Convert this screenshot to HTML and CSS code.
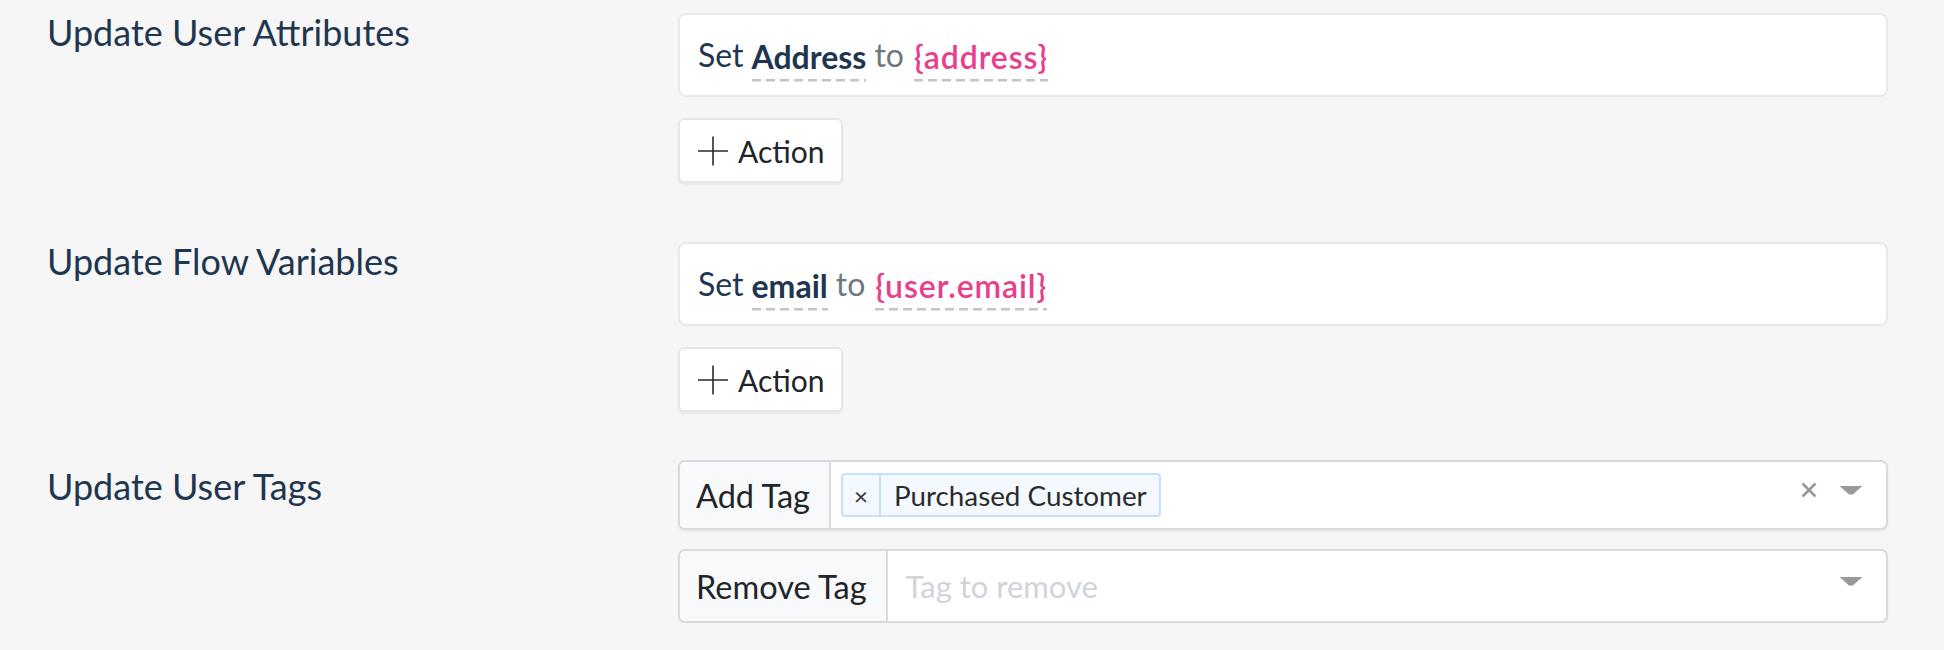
FILE: index.html
```html
<!DOCTYPE html>
<html lang="en">
<head>
<meta charset="utf-8">
<title>Actions</title>
<link rel="stylesheet" href="styles.css">
</head>
<body>
<div class="page">
  <section class="section section-attrs">
    <div class="label">Update User Attributes</div>
    <div class="content">
      <div class="rule">
        <span class="kw">Set</span>
        <span class="field">Address</span>
        <span class="to">to</span>
        <span class="value">{address}</span>
      </div>
      <button class="add-action" type="button">
        <svg class="plus" viewBox="0 0 30 30" width="30" height="30" aria-hidden="true"><path d="M15 0.5V29.5M0 15H30" stroke="#2b2b2b" stroke-width="1.6" fill="none"/></svg>
        <span>Action</span>
      </button>
    </div>
  </section>

  <section class="section section-vars">
    <div class="label">Update Flow Variables</div>
    <div class="content">
      <div class="rule">
        <span class="kw">Set</span>
        <span class="field">email</span>
        <span class="to">to</span>
        <span class="value">{user.email}</span>
      </div>
      <button class="add-action" type="button">
        <svg class="plus" viewBox="0 0 30 30" width="30" height="30" aria-hidden="true"><path d="M15 0.5V29.5M0 15H30" stroke="#2b2b2b" stroke-width="1.6" fill="none"/></svg>
        <span>Action</span>
      </button>
    </div>
  </section>

  <section class="section section-tags">
    <div class="label label-tags">Update User Tags</div>
    <div class="content content-tags">
      <div class="input-group input-add">
        <div class="addon">Add Tag</div>
        <div class="select">
          <div class="chip">
            <span class="chip-remove">×</span>
            <span class="chip-label">Purchased Customer</span>
          </div>
          <div class="indicators">
            <svg class="clear" viewBox="0 0 16 16" width="16" height="16" aria-hidden="true"><path d="M1.5 1.5L14.5 14.5M14.5 1.5L1.5 14.5" stroke="#999" stroke-width="2.6" fill="none"/></svg>
            <span class="caret"></span>
          </div>
        </div>
      </div>
      <div class="input-group input-remove">
        <div class="addon">Remove Tag</div>
        <div class="select">
          <span class="placeholder">Tag to remove</span>
          <div class="indicators">
            <span class="caret"></span>
          </div>
        </div>
      </div>
    </div>
  </section>
</div>
</body>
</html>
```

FILE: styles.css
```css
* { box-sizing: border-box; }

html, body {
  margin: 0;
  padding: 0;
  background: #f6f6f6;
}

body {
  font-family: Lato, "Liberation Sans", sans-serif;
  color: #212529;
}

.page {
  padding: 13px 56px 0 47px;
}

.section {
  display: flex;
  align-items: flex-start;
}

.section-vars { margin-top: 59px; }
.section-tags { margin-top: 48px; }

.label {
  width: 631px;
  flex: none;
  font-size: 36px;
  line-height: 36px;
  color: #1e3650;
  padding-top: 1px;
}

.label-tags { padding-top: 8px; }

.content {
  flex: 1;
  display: flex;
  flex-direction: column;
  align-items: flex-start;
  gap: 21px;
}

.content-tags { gap: 19px; }

.rule {
  width: 100%;
  height: 84px;
  background: #fff;
  border: 2px solid #e9e9e9;
  border-radius: 8px;
  padding: 0 18px;
  display: flex;
  align-items: center;
  gap: 8px;
  font-size: 32px;
  line-height: 36px;
  color: #1e3650;
}

.field, .value {
  padding-top: 10px;
  padding-bottom: 7px;
  background-image: repeating-linear-gradient(to right, #c4c4c4 0 9px, transparent 9px 14px);
  background-size: 100% 2.5px;
  background-repeat: no-repeat;
  background-position: left bottom;
}

.field { font-weight: 700; }

.to { color: #6f7780; }

.value {
  color: #e83e8c;
  font-weight: 600;
  letter-spacing: 0.9px;
  margin-left: 2px;
}

.add-action {
  width: 165px;
  height: 65px;
  background: #fff;
  border: 2px solid #e6e6e6;
  border-radius: 6px;
  box-shadow: 0 2px 2px rgba(0, 0, 0, 0.06);
  padding: 0 0 0 18px;
  display: flex;
  align-items: center;
  gap: 10px;
  font-family: inherit;
  font-size: 30px;
  color: #212529;
  cursor: pointer;
}

.plus { flex: none; }

.input-group {
  width: 100%;
  display: flex;
  background: #fff;
  border: 2px solid #d6dbe1;
  border-radius: 7px;
  box-shadow: 0 2px 2px rgba(0, 0, 0, 0.05);
  overflow: hidden;
}

.input-add { height: 70px; }
.input-remove { height: 74px; }

.addon {
  flex: none;
  background: #f8f9fa;
  border-right: 2px solid #d6dbe1;
  padding: 0 19px 0 16px;
  display: flex;
  align-items: center;
  font-size: 32.5px;
  color: #212529;
}

.select {
  flex: 1;
  display: flex;
  align-items: center;
  padding-left: 10px;
  padding-right: 23px;
}

.chip {
  display: flex;
  height: 44px;
  border: 2px solid #c6e0fc;
  border-radius: 4px;
  background: #f4f9ff;
  font-size: 27.8px;
  color: #2b2b2b;
}

.chip-remove {
  width: 38px;
  border-right: 2px solid #c6e0fc;
  display: flex;
  align-items: center;
  justify-content: center;
  font-size: 24px;
  color: #333;
}

.chip-label {
  padding: 0 12px 0 13px;
  display: flex;
  align-items: center;
}

.placeholder {
  padding-left: 8px;
  font-size: 31px;
  color: #cfd4da;
}

.indicators {
  margin-left: auto;
  display: flex;
  align-items: center;
  gap: 22px;
  padding-bottom: 10px;
}

.caret {
  width: 24px;
  height: 9px;
  background: #999;
  clip-path: polygon(0 0, 100% 0, 58% 100%, 42% 100%);
}
```
